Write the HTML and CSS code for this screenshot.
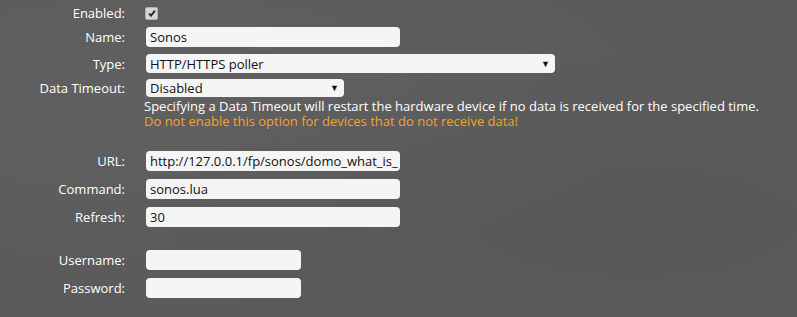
FILE: index.html
```html
<!DOCTYPE html>
<html>
<head>
<meta charset="utf-8">
<link rel="stylesheet" href="styles.css">
</head>
<body>
<form class="form">
  <div class="row row-enabled">
    <label class="lbl">Enabled:</label>
    <div class="field"><span class="check"><svg width="8" height="8" viewBox="0 0 8 8"><path d="M1 4.6 L3 6.6 L7 1.6" fill="none" stroke="#2b2b2b" stroke-width="2"/></svg></span></div>
  </div>
  <div class="row row-name">
    <label class="lbl">Name:</label>
    <div class="field"><div class="input w254">Sonos</div></div>
  </div>
  <div class="row row-type">
    <label class="lbl">Type:</label>
    <div class="field"><div class="select w409"><span>HTTP/HTTPS poller</span><span class="arrow">▼</span></div></div>
  </div>
  <div class="row row-timeout">
    <label class="lbl">Data Timeout:</label>
    <div class="field"><div class="select w198"><span>Disabled</span><span class="arrow">▼</span></div></div>
  </div>
  <div class="row row-help">
    <div class="lbl"></div>
    <div class="field help">
      <p class="help-line">Specifying a Data Timeout will restart the hardware device if no data is received for the specified time.</p>
      <p class="help-line warn">Do not enable this option for devices that do not receive data!</p>
    </div>
  </div>
  <div class="row row-url">
    <label class="lbl">URL:</label>
    <div class="field"><div class="input w254">http://127.0.0.1/fp/sonos/domo_what_is_</div></div>
  </div>
  <div class="row row-cmd">
    <label class="lbl">Command:</label>
    <div class="field"><div class="input w254">sonos.lua</div></div>
  </div>
  <div class="row row-refresh">
    <label class="lbl">Refresh:</label>
    <div class="field"><div class="input w254">30</div></div>
  </div>
  <div class="row row-user">
    <label class="lbl">Username:</label>
    <div class="field"><div class="input w155"></div></div>
  </div>
  <div class="row row-pass">
    <label class="lbl">Password:</label>
    <div class="field"><div class="input w155"></div></div>
  </div>
</form>
</body>
</html>
```
FILE: styles.css
```css
html, body {
  margin: 0;
  padding: 0;
}
body {
  width: 797px;
  height: 317px;
  overflow: hidden;
  background-color: #5b5b5b;
  background-image:
    radial-gradient(ellipse at 20% 30%, rgba(255,255,255,0.03), transparent 60%),
    radial-gradient(ellipse at 80% 70%, rgba(0,0,0,0.04), transparent 60%);
  font-family: "Open Sans", "Noto Sans", sans-serif;
  font-size: 13px;
  color: #ffffff;
}
.form {
  display: flex;
  flex-direction: column;
}
.row {
  display: flex;
  align-items: center;
}
.lbl {
  width: 125px;
  flex: 0 0 125px;
  text-align: right;
  font-size: 13px;
}
.field {
  margin-left: 21px;
  display: flex;
  flex-direction: column;
}
.row-enabled { margin-top: 3px; height: 20px; }
.row-name { margin-top: 4px; height: 20px; }
.row-type { margin-top: 7px; height: 19px; }
.row-timeout { margin-top: 6px; height: 18px; }
.row-help { margin-top: 2px; align-items: flex-start; }
.row-url { margin-top: 22px; height: 20px; }
.row-cmd { margin-top: 8px; height: 20px; }
.row-refresh { margin-top: 8px; height: 20px; }
.row-user { margin-top: 23px; height: 20px; }
.row-pass { margin-top: 8px; height: 20px; }

.check {
  width: 11px;
  height: 11px;
  margin-left: -1px;
  background: #d6d6d6;
  border: 1px solid #b0b0b0;
  border-radius: 2px;
  display: flex;
  align-items: center;
  justify-content: center;
}
.input, .select {
  box-sizing: border-box;
  height: 20px;
  background: #f5f5f5;
  border-radius: 4px;
  color: #111;
  font-size: 13px;
  line-height: 20px;
  padding: 0 4px;
  white-space: nowrap;
  overflow: hidden;
}
.select {
  height: 18px;
  line-height: 18px;
  display: flex;
  justify-content: space-between;
  align-items: center;
}
.row-type .select { height: 19px; }
.arrow {
  font-size: 9px;
  color: #111;
  margin-right: 1px;
}
.w254 { width: 254px; }
.w409 { width: 409px; }
.w198 { width: 198px; }
.w155 { width: 155px; }
.help {
  font-size: 13px;
  margin-left: 19px;
  white-space: nowrap;
}
.help-line {
  margin: 0;
  height: 15px;
  line-height: 15px;
}
.warn { color: #f0a620; }
```
